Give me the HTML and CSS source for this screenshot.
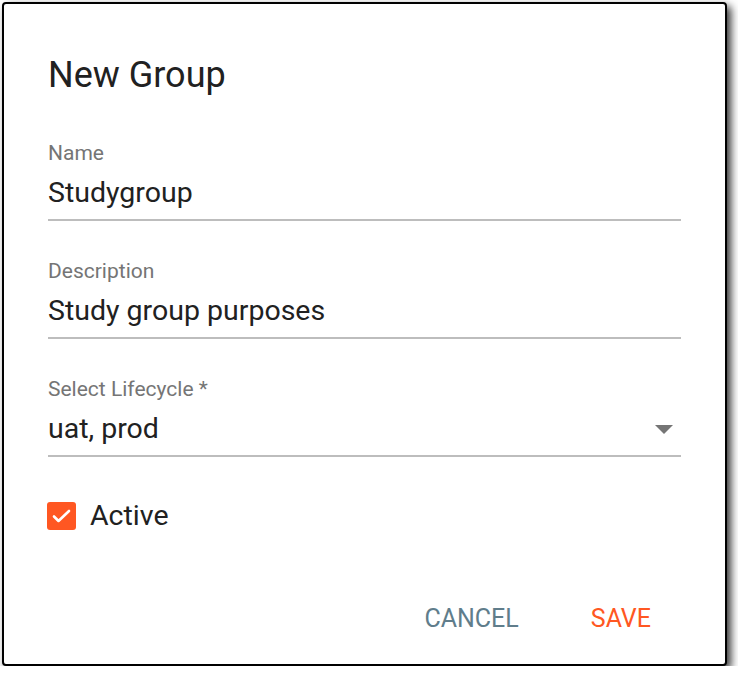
FILE: index.html
```html
<!DOCTYPE html>
<html lang="en">
<head>
    <meta charset="UTF-8">
    <title>New Group</title>
    <link rel="stylesheet" href="styles.css">
</head>
<body>
<div class="dialog">
    <h2 class="dialog-title">New Group</h2>
    <div class="field">
        <label class="field-label">Name</label>
        <div class="field-value">Studygroup</div>
    </div>
    <div class="field">
        <label class="field-label">Description</label>
        <div class="field-value">Study group purposes</div>
    </div>
    <div class="field field-select">
        <label class="field-label">Select Lifecycle *</label>
        <div class="field-value">
            <span>uat, prod</span>
            <svg class="arrow" width="18" height="9" viewBox="0 0 18 9"><path d="M0 0h18L9 9z" fill="#757575"/></svg>
        </div>
    </div>
    <div class="check-row">
        <span class="checkbox">
            <svg width="29" height="28" viewBox="0 0 29 28"><path d="M7 14.5l4.5 4.5L22 9" fill="none" stroke="#fff" stroke-width="2.6" stroke-linecap="round" stroke-linejoin="round"/></svg>
        </span>
        <span class="check-label">Active</span>
    </div>
    <div class="actions">
        <button class="btn btn-cancel">CANCEL</button>
        <button class="btn btn-save">SAVE</button>
    </div>
</div>
</body>
</html>
```

FILE: styles.css
```css
html, body{
    margin: 0;
    padding: 0;
    background: #fff;
}
body{
    padding: 2px 0 0 2px;
    font-family: Roboto, "Liberation Sans", sans-serif;
}
.dialog{
    box-sizing: border-box;
    width: 725px;
    height: 664px;
    border: 2px solid #000;
    border-radius: 4px;
    background: #fff;
    box-shadow: 4px 4px 8px rgba(0,0,0,0.8);
    padding: 0 44px;
    display: flex;
    flex-direction: column;
}
.dialog-title{
    margin: 50px 0 0 0;
    font-size: 36px;
    font-weight: 400;
    line-height: 42px;
    color: #212121;
}
.field{
    margin-top: 45px;
    border-bottom: 2px solid #bdbdbd;
    padding-bottom: 8px;
}
.field + .field{
    margin-top: 38px;
}
.field-label{
    display: block;
    font-size: 21px;
    line-height: 24px;
    color: #757575;
}
.field-value{
    margin-top: 10px;
    font-size: 28.5px;
    line-height: 36px;
    color: #212121;
    display: flex;
    align-items: center;
    justify-content: space-between;
}
.arrow{
    margin-right: 8px;
}
.check-row{
    margin-top: 42px;
    margin-left: -1px;
    display: flex;
    align-items: center;
    gap: 14px;
}
.checkbox{
    width: 29px;
    height: 28px;
    border-radius: 3px;
    background: #ff5722;
    display: flex;
}
.check-label{
    font-size: 28.5px;
    line-height: 34px;
    color: #212121;
}
.actions{
    margin-top: auto;
    margin-bottom: 25px;
    display: flex;
    justify-content: flex-end;
    gap: 72px;
    padding-right: 30px;
}
.btn{
    border: none;
    background: none;
    padding: 6px 0;
    font-family: Roboto, "Liberation Sans", sans-serif;
    font-size: 25px;
    line-height: 29px;
    cursor: pointer;
}
.btn-cancel{
    color: #607d8b;
}
.btn-save{
    color: #ff5722;
}
```
